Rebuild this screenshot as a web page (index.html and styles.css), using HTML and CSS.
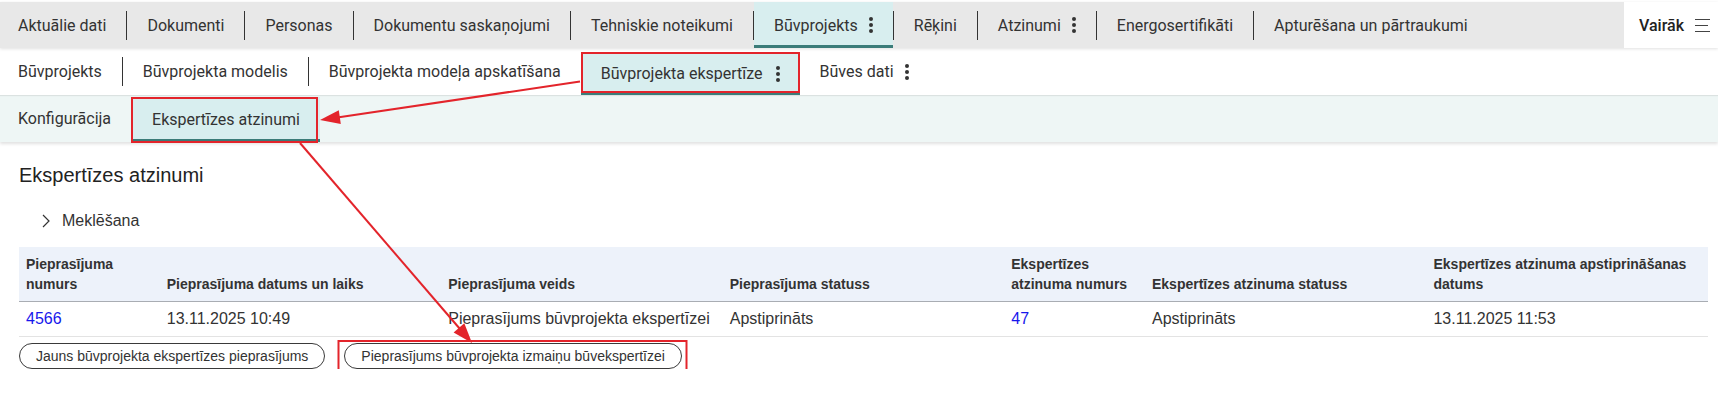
FILE: index.html
```html
<!DOCTYPE html>
<html lang="lv">
    <head>
        <meta charset="utf-8">
        <title>Ekspertīzes atzinumi</title>
        <link rel="stylesheet" href="styles.css">
    </head>
    <body>
        <!-- top level tabs -->
        <nav class="tabs tabs-top">
            <div class="tabs-list">
                <a class="tab">Aktuālie dati</a><span class="sep"></span>
                <a class="tab">Dokumenti</a><span class="sep"></span>
                <a class="tab">Personas</a><span class="sep"></span>
                <a class="tab">Dokumentu saskaņojumi</a><span class="sep"></span>
                <a class="tab">Tehniskie noteikumi</a><span class="sep"></span>
                <a class="tab active">Būvprojekts
                    <svg class="kebab" width="4" height="16" viewBox="0 0 4 16"><circle cx="2" cy="2" r="2"/><circle cx="2" cy="8" r="2"/><circle cx="2" cy="14" r="2"/></svg>
                </a><span class="sep"></span>
                <a class="tab">Rēķini</a><span class="sep"></span>
                <a class="tab">Atzinumi
                    <svg class="kebab" width="4" height="16" viewBox="0 0 4 16"><circle cx="2" cy="2" r="2"/><circle cx="2" cy="8" r="2"/><circle cx="2" cy="14" r="2"/></svg>
                </a><span class="sep"></span>
                <a class="tab">Energosertifikāti</a><span class="sep"></span>
                <a class="tab">Apturēšana un pārtraukumi</a>
            </div>
            <div class="more">
                Vairāk
                <svg width="17" height="14" viewBox="0 0 17 14"><path d="M1 1.5H16M1 7.5H14M1 13.5H16" stroke="#444" stroke-width="1.2"/></svg>
            </div>
        </nav>

        <!-- second level -->
        <nav class="tabs tabs-sub">
            <a class="tab">Būvprojekts</a><span class="sep"></span>
            <a class="tab">Būvprojekta modelis</a><span class="sep"></span>
            <a class="tab">Būvprojekta modeļa apskatīšana</a>
            <a class="tab active">Būvprojekta ekspertīze
                <svg class="kebab" width="4" height="16" viewBox="0 0 4 16"><circle cx="2" cy="2" r="2"/><circle cx="2" cy="8" r="2"/><circle cx="2" cy="14" r="2"/></svg>
            </a>
            <a class="tab">Būves dati
                <svg class="kebab" width="4" height="16" viewBox="0 0 4 16"><circle cx="2" cy="2" r="2"/><circle cx="2" cy="8" r="2"/><circle cx="2" cy="14" r="2"/></svg>
            </a>
        </nav>

        <!-- third level -->
        <nav class="tabs tabs-third">
            <a class="tab">Konfigurācija</a><span class="sep"></span>
            <a class="tab active">Ekspertīzes atzinumi</a>
        </nav>

        <main class="content">
            <h1>Ekspertīzes atzinumi</h1>
            <div class="search-toggle">
                <svg width="8" height="14" viewBox="0 0 8 14"><path d="M1 1L7 7L1 13" fill="none" stroke="#333" stroke-width="1.2"/></svg>
                <span>Meklēšana</span>
            </div>

            <table class="grid">
                <colgroup>
                    <col class="narrow"><col class="wide"><col class="wide"><col class="wide">
                    <col class="narrow"><col class="wide"><col class="wide">
                </colgroup>
                <thead>
                    <tr>
                        <th>Pieprasījuma numurs</th>
                        <th>Pieprasījuma datums un laiks</th>
                        <th>Pieprasījuma veids</th>
                        <th>Pieprasījuma statuss</th>
                        <th>Ekspertīzes atzinuma numurs</th>
                        <th>Ekspertīzes atzinuma statuss</th>
                        <th>Ekspertīzes atzinuma apstiprināšanas datums</th>
                    </tr>
                </thead>
                <tbody>
                    <tr>
                        <td><a class="link">4566</a></td>
                        <td>13.11.2025 10:49</td>
                        <td>Pieprasījums būvprojekta ekspertīzei</td>
                        <td>Apstiprināts</td>
                        <td><a class="link">47</a></td>
                        <td>Apstiprināts</td>
                        <td>13.11.2025 11:53</td>
                    </tr>
                </tbody>
            </table>

            <div class="actions">
                <button class="pill">Jauns būvprojekta ekspertīzes pieprasījums</button>
                <button class="pill">Pieprasījums būvprojekta izmaiņu būvekspertīzei</button>
            </div>
        </main>

        <!-- red annotations drawn on top of the screenshot -->
        <svg class="annotations" width="1718" height="394" viewBox="0 0 1718 394">
            <g fill="none" stroke="#e3242b" stroke-width="2">
                <rect x="582" y="53" width="217" height="39"/>
                <rect x="132" y="98" width="185" height="44"/>
                <rect x="338.5" y="341" width="348" height="32"/>
                <line x1="580" y1="81.5" x2="339" y2="117.2"/>
                <line x1="300" y1="143" x2="460" y2="329"/>
            </g>
            <g fill="#e3242b">
                <polygon points="320,120 338.8,110.2 340.8,124"/>
                <polygon points="472,343 453.6,332.4 464.3,323.3"/>
            </g>
        </svg>
    </body>
</html>
```

FILE: styles.css
```css
* {
    box-sizing: border-box;
}

body {
    margin: 0;
    padding-top: 2px;
    position: relative;
    background-color: white;
    font-family: 'Liberation Sans', Arial, sans-serif;
    color: #333;
}

.tabs {
    display: flex;
    align-items: stretch;
    font-family: Roboto, 'Noto Sans', sans-serif;
    font-size: 16px;
    color: #333;
}

.tab {
    display: flex;
    align-items: center;
    padding: 0 20px;
    white-space: nowrap;
    cursor: pointer;
}

.tab:first-child {
    padding-left: 18px;
}

.sep {
    width: 1px;
    height: 29px;
    align-self: center;
    background-color: #333;
    flex: none;
}

.kebab {
    margin-left: 11px;
    fill: #333;
}

/* top row */
.tabs-top {
    height: 46px;
    background-color: #e8e8e8;
    box-shadow: 0 1px 3px rgba(0, 0, 0, 0.12);
    position: relative;
    z-index: 2;
}

.tabs-list {
    display: flex;
    flex: 1;
}

.tabs-top .tab.active {
    background-color: #d8eeef;
    box-shadow: inset 0 -3px 0 #3b7c79;
}

.more {
    width: 94px;
    display: flex;
    align-items: center;
    gap: 10px;
    padding-left: 15px;
    background-color: white;
    font-weight: 500;
    color: #222;
}

/* second row */
.tabs-sub {
    height: 47px;
    background-color: white;
    position: relative;
    z-index: 1;
    box-shadow: 0 1px 1px rgba(0, 0, 0, 0.08);
}

.tabs-sub .tab.active {
    margin-top: 4px;
    background-color: #d8eeef;
    box-shadow: inset 0 -2px 0 #3b7c79;
}

.tabs-sub .tab.active .kebab {
    margin-left: 13px;
}

/* third row */
.tabs-third {
    height: 47px;
    background-color: #eef6f5;
    box-shadow: 0 2px 3px rgba(0, 0, 0, 0.12);
}

.tabs-third .tab.active {
    margin-top: 2px;
    background-color: #d8eeef;
    box-shadow: inset 0 -3px 0 #3b7c79;
}

/* page content */
.content {
    padding: 0 10px 0 19px;
}

h1 {
    margin: 21px 0 0 0;
    font-size: 20px;
    line-height: 24px;
    font-weight: normal;
    color: #222;
}

.search-toggle {
    display: flex;
    align-items: center;
    gap: 12px;
    margin-top: 22px;
    padding-left: 23px;
    font-size: 16px;
    line-height: 24px;
}

.grid {
    width: 100%;
    margin-top: 14px;
    border-collapse: collapse;
    table-layout: fixed;
}

.grid col.narrow {
    width: 8.333%;
}

.grid col.wide {
    width: 16.667%;
}

.grid th {
    background-color: #edf2fa;
    font-size: 14px;
    font-weight: bold;
    line-height: 20px;
    text-align: left;
    vertical-align: bottom;
    padding: 7px 7px;
    border-bottom: 1px solid #a9adb3;
    color: #333;
}

.grid td {
    font-size: 16px;
    line-height: 20px;
    padding: 7px 7px;
    border-bottom: 1px solid #e3e3e3;
    color: #333;
}

.link {
    color: #1717ec;
    cursor: pointer;
}

.actions {
    display: flex;
    gap: 19px;
    margin-top: 6px;
}

.pill {
    font-family: 'Liberation Sans', Arial, sans-serif;
    font-size: 14px;
    line-height: 16px;
    padding: 4px 16px;
    height: 26px;
    border: 1px solid #3a3a3a;
    border-radius: 14px;
    background-color: white;
    color: #333;
}

.annotations {
    position: absolute;
    top: 0;
    left: 0;
    pointer-events: none;
    z-index: 5;
}
```
